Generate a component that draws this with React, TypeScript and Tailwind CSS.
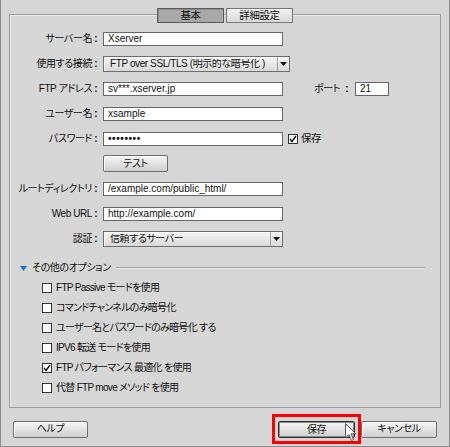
import React from "react";

function Arrow() {
  return (
    <svg width="7" height="4" viewBox="0 0 7 4" className="block">
      <path d="M0 0 L7 0 L3.5 4 Z" fill="#111" />
    </svg>
  );
}

function Btn({ children, w, primary }: { children: React.ReactNode; w: string; primary?: boolean }) {
  return (
    <button
      className={
        (primary
          ? "border-[#2e2e2e] shadow-[inset_0_0_0_1px_#8a8a8a] "
          : "border-[#6e6e6e] shadow-[inset_1px_1px_0_#ffffff] ") +
        w +
        " h-[17px] flex items-center justify-center border rounded-[2px] bg-linear-to-b from-[#f6f6f6] to-[#cfcfcf] text-[#111] leading-none"
      }
    >
      {children}
    </button>
  );
}

function Box({ checked }: { checked?: boolean }) {
  return (
    <span className="w-[10px] h-[10px] shrink-0 bg-white border border-[#333] flex items-center justify-center">
      {checked && (
        <svg width="8" height="8" viewBox="0 0 8 8" className="block">
          <path d="M1 4 L3 6.5 L7 1" fill="none" stroke="#111" strokeWidth="1.4" />
        </svg>
      )}
    </span>
  );
}

function Label({ children }: { children: React.ReactNode }) {
  return (
    <>
      <span className="w-[82px] text-right whitespace-nowrap">{children}</span>
      <span className="w-[8px] text-center font-bold tracking-normal">:</span>
    </>
  );
}

function TextInput({ value, w, bold }: { value: string; w: string; bold?: boolean }) {
  return (
    <input
      readOnly
      value={value}
      className={
        w +
        (bold ? " font-bold tracking-[0.6px]" : " tracking-normal") +
        " ml-[3px] h-[14px] bg-white border border-[#666] px-[4px] text-[10px] leading-none text-[#111] outline-none"
      }
    />
  );
}

function Select({ value, w }: { value: string; w: string }) {
  return (
    <div
      className={
        w +
        " ml-[3px] h-[16px] flex items-center border border-[#6c6c6c] bg-linear-to-b from-[#f5f5f5] to-[#d9d9d9] shadow-[inset_1px_1px_0_#ffffff]"
      }
    >
      <span className="flex-1 pl-[6px] whitespace-nowrap leading-none overflow-hidden">{value}</span>
      <span className="w-[12px] shrink-0 h-full border-l border-[#a0a0a0] flex items-center justify-center">
        <Arrow />
      </span>
    </div>
  );
}

function Row({ children }: { children: React.ReactNode }) {
  return <div className="flex items-center h-[25px]">{children}</div>;
}

function Option({ label, checked }: { label: React.ReactNode; checked?: boolean }) {
  return (
    <div className="flex items-center h-[20px] pl-[32px]">
      <Box checked={checked} />
      <span className="ml-[4px] whitespace-nowrap tracking-[-0.7px]">{label}</span>
    </div>
  );
}

export default function App() {
  return (
    <div className="w-[450px] h-[447px] box-border bg-[#d6d6d6] border-x border-b border-[#8c8c8c] px-[8px] pt-[14px] flex flex-col text-[10px] tracking-[-0.4px] text-[#0f0f0f] leading-none font-['Liberation_Sans','Noto_Sans_CJK_JP',sans-serif] [font-feature-settings:'palt']">
      <div className="relative h-[394px] border border-[#9c9c9c] shadow-[inset_1px_1px_0_#ececec] pt-[11px]">
        <div className="absolute left-1/2 -translate-x-1/2 top-[-7px] flex gap-[2px] text-[10.5px]">
          <div className="w-[67px] h-[15px] flex items-center justify-center bg-[#a8a8a8] border border-[#5a5a5a] shadow-[inset_1px_1px_0_#8e8e8e]">
            基本
          </div>
          <div className="w-[67px] h-[15px] flex items-center justify-center bg-linear-to-b from-[#f2f2f2] to-[#d8d8d8] border border-[#777]">
            詳細設定
          </div>
        </div>

        <Row>
          <Label>サーバー名</Label>
          <TextInput value="Xserver" w="w-[180px]" />
        </Row>
        <Row>
          <Label>使用する接続</Label>
          <Select value="FTP over SSL/TLS (明示的な暗号化 )" w="w-[187px]" />
        </Row>
        <Row>
          <Label>FTP アドレス</Label>
          <TextInput value="sv***.xserver.jp" w="w-[180px]" />
          <span className="ml-[31px] whitespace-nowrap">ポート</span>
          <span className="w-[10px] text-center font-bold ml-[2px] tracking-normal">:</span>
          <TextInput value="21" w="w-[34px]" />
        </Row>
        <Row>
          <Label>ユーザー名</Label>
          <TextInput value="xsample" w="w-[180px]" />
        </Row>
        <Row>
          <Label>パスワード</Label>
          <TextInput value="••••••••" w="w-[180px]" bold />
          <span className="ml-[5px]">
            <Box checked />
          </span>
          <span className="ml-[3px] text-[10.5px]">保存</span>
        </Row>
        <Row>
          <span className="w-[90px]" />
          <span className="ml-[3px]">
            <Btn w="w-[65px]">テスト</Btn>
          </span>
        </Row>
        <Row>
          <Label>ルートディレクトリ</Label>
          <TextInput value="/example.com/public_html/" w="w-[180px]" />
        </Row>
        <Row>
          <Label>Web URL</Label>
          <TextInput value="http://example.com/" w="w-[180px]" />
        </Row>
        <Row>
          <Label>認証</Label>
          <Select value="信頼するサーバー" w="w-[180px]" />
        </Row>

        <div className="flex items-center h-[20px] mt-[7px] pl-[10px] pr-[15px]">
          <svg width="7" height="5" viewBox="0 0 7 5" className="block">
            <path d="M0 0 L7 0 L3.5 5 Z" fill="#1d6fd8" />
          </svg>
          <span className="ml-[5px] whitespace-nowrap">その他のオプション</span>
          <span className="flex-1 ml-[5px] h-[2px] border-t border-[#a2a2a2] border-b border-b-[#ededed]" />
        </div>
        <Option label="FTP Passive モードを使用" />
        <Option label="コマンドチャンネルのみ暗号化" />
        <Option label="ユーザー名とパスワードのみ暗号化 する" />
        <Option label="IPV6 転送 モードを使用" />
        <Option label="FTP パフォーマンス 最適化 を使用" checked />
        <Option label="代替 FTP move メソッド を使用" />
      </div>

      <div className="flex items-center mt-[6px] pl-[4px] pr-[4px]">
        <Btn w="w-[75px]">ヘルプ</Btn>
        <div className="flex-1" />
        <div className="relative border-[3px] border-[#ff0000] px-[3px] pt-[4px] pb-[3px]">
          <Btn w="w-[77px]" primary>
            保存
          </Btn>
          <svg
            width="12"
            height="19"
            viewBox="0 0 12 19"
            className="absolute left-[70px] top-[6px]"
          >
            <path
              d="M0.5 0.5 L0.5 15 L4 11.5 L6.5 17.5 L8.5 16.7 L6 10.8 L10.8 10.8 Z"
              fill="#ffffff"
              stroke="#555"
              strokeWidth="1"
            />
          </svg>
        </div>
        <Btn w="w-[76px]">キャンセル</Btn>
      </div>
    </div>
  );
}
